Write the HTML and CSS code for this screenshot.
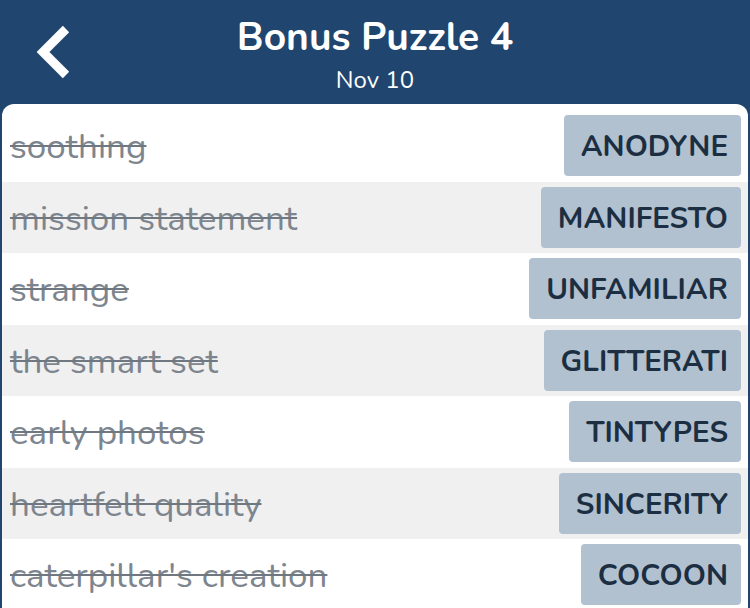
FILE: index.html
```html
<!DOCTYPE html>
<html>
<head>
<meta charset="utf-8">
<link rel="stylesheet" href="styles.css">
</head>
<body>
<div class="screen">
  <header class="topbar">
    <svg class="back" width="50" height="60" viewBox="0 0 50 60">
      <polyline points="30,4 7,27 30,50" fill="none" stroke="#ffffff" stroke-width="9" stroke-linejoin="miter" stroke-linecap="butt"/>
    </svg>
    <div class="titles">
      <div class="title">Bonus Puzzle 4</div>
      <div class="subtitle">Nov 10</div>
    </div>
  </header>
  <main class="card">
    <div class="row"><span class="clue">soothing</span><span class="answer">ANODYNE</span></div>
    <div class="row alt"><span class="clue">mission statement</span><span class="answer">MANIFESTO</span></div>
    <div class="row"><span class="clue">strange</span><span class="answer">UNFAMILIAR</span></div>
    <div class="row alt"><span class="clue">the smart set</span><span class="answer">GLITTERATI</span></div>
    <div class="row"><span class="clue">early photos</span><span class="answer">TINTYPES</span></div>
    <div class="row alt"><span class="clue">heartfelt quality</span><span class="answer">SINCERITY</span></div>
    <div class="row"><span class="clue">caterpillar's creation</span><span class="answer">COCOON</span></div>
  </main>
</div>
</body>
</html>
```

FILE: styles.css
```css
html, body {
  margin: 0;
  padding: 0;
  background: #20466f;
  overflow: hidden;
}
.screen {
  width: 750px;
  height: 608px;
  display: flex;
  flex-direction: column;
  font-family: "Nunito", "Lato", "Noto Sans", sans-serif;
}
.topbar {
  height: 104px;
  flex: none;
  position: relative;
  display: flex;
  justify-content: center;
  background: #20466f;
  color: #ffffff;
}
.back {
  position: absolute;
  left: 36px;
  top: 25px;
}
.titles {
  display: flex;
  flex-direction: column;
  align-items: center;
  padding-top: 13px;
}
.title {
  font-size: 39px;
  font-weight: 700;
  line-height: 50px;
}
.subtitle {
  font-size: 24px;
  line-height: 32px;
  margin-top: 1px;
}
.card {
  flex: 1;
  margin: 0 2px;
  background: #ffffff;
  border-radius: 12px 12px 0 0;
  padding-top: 6px;
  overflow: hidden;
}
.row {
  height: 71.5px;
  display: flex;
  align-items: center;
  justify-content: space-between;
  padding: 0 7px 0 8px;
}
.row.alt {
  background: #f0f0f0;
}
.clue {
  font-size: 35px;
  color: #7d858e;
  text-decoration: line-through;
  text-decoration-thickness: 2px;
  text-decoration-color: #6f7780;
  padding-top: 2px;
}
.answer {
  height: 61px;
  display: flex;
  align-items: center;
  padding: 1px 13px 0 17px;
  box-sizing: border-box;
  background: #b1c1cf;
  border-radius: 4px;
  color: #1c2e42;
  font-size: 29.5px;
  font-weight: 700;
}
```
